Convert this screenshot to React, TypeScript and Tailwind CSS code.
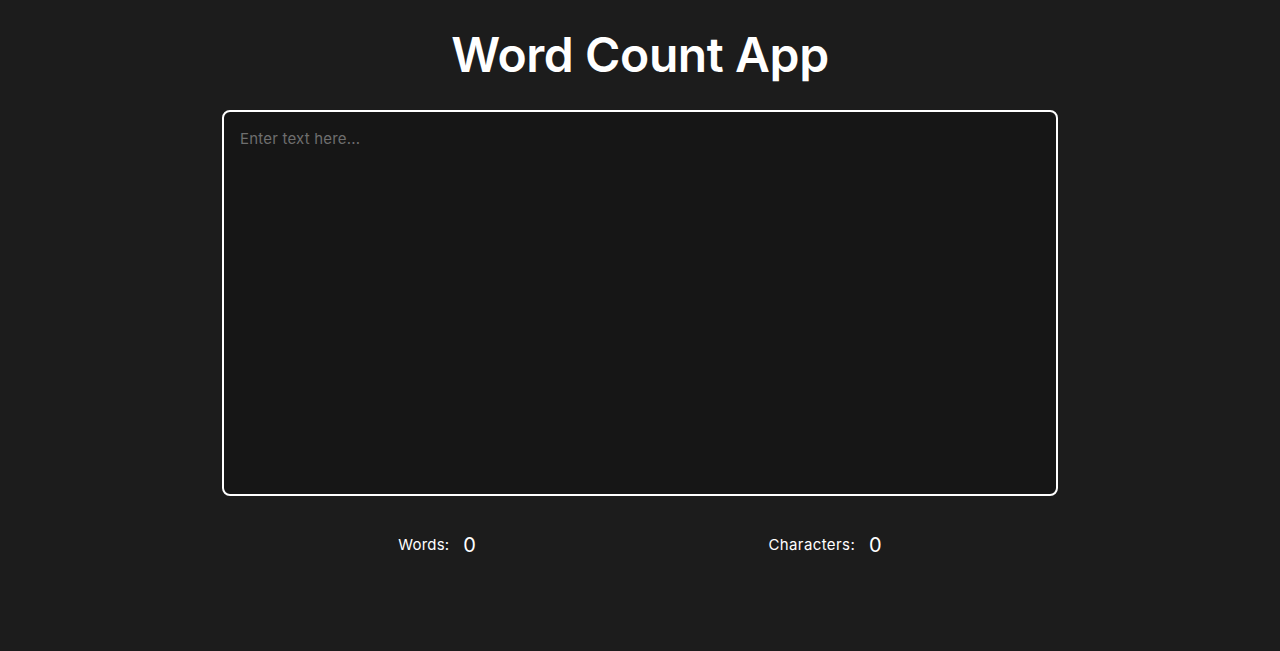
import React, { useState } from "react";

export default function App() {
  const [text, setText] = useState("");
  const words = text.trim() ? text.trim().split(/\s+/).length : 0;
  const chars = text.length;
  return (
    <div
      className="min-h-screen h-[651px] bg-[#1c1c1c] text-white flex flex-col items-center"
      style={{ fontFamily: "Inter, 'Noto Sans', sans-serif" }}
    >
      <h1 className="mt-[26px] text-[48px] leading-[58px] font-semibold tracking-[-0.4px]">
        Word Count App
      </h1>
      <textarea
        value={text}
        onChange={(e) => setText(e.target.value)}
        placeholder="Enter text here..."
        className="mt-[26px] w-[836px] h-[386px] bg-[#161616] border-2 border-white rounded-[8px] px-4 py-[16px] text-[15px] leading-[22px] tracking-[0.2px] text-white placeholder:text-[#6e6e6e] outline-none resize-none"
      />
      <div className="mt-[34px] w-[776px] flex justify-around items-center">
        <div className="flex items-center gap-[14px]">
          <span className="text-[15px] tracking-[0.2px]">Words:</span>
          <span className="text-[20px]">{words}</span>
        </div>
        <div className="flex items-center gap-[14px]">
          <span className="text-[15px] tracking-[0.4px]">Characters:</span>
          <span className="text-[20px]">{chars}</span>
        </div>
      </div>
    </div>
  );
}
